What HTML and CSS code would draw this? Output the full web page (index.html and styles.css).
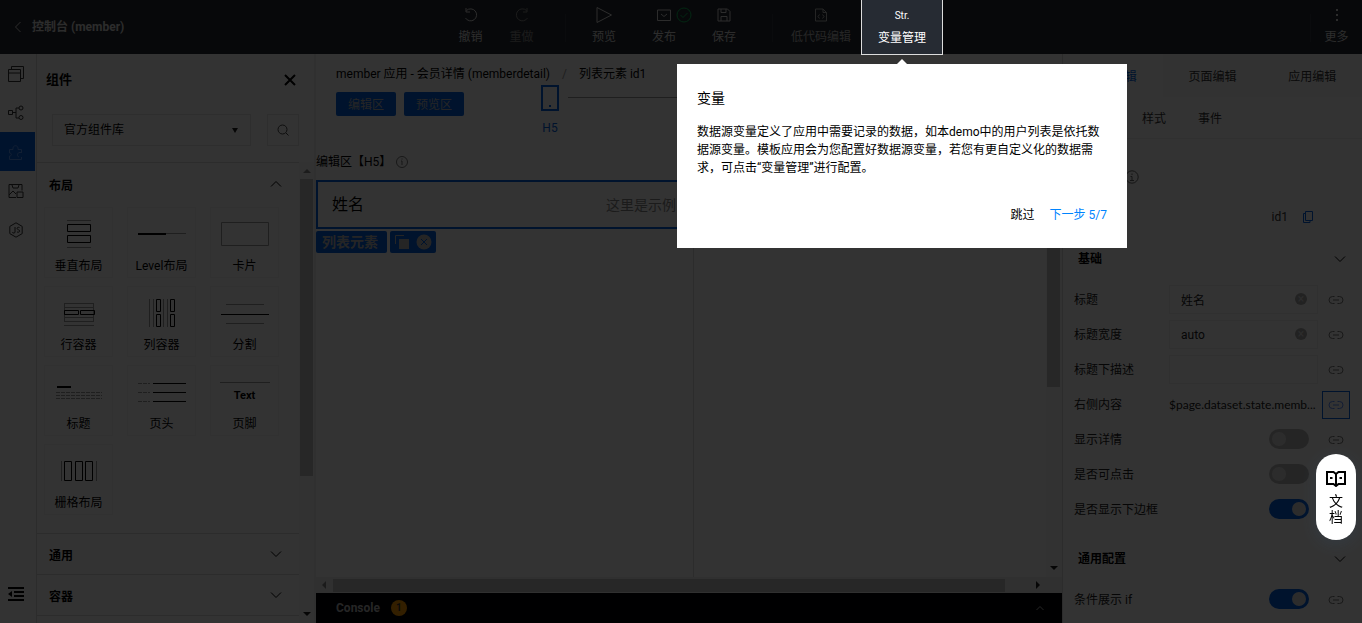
FILE: index.html
```html
<!DOCTYPE html>
<html lang="zh-CN">
<head>
<meta charset="utf-8">
<title>控制台 (member)</title>
<link rel="stylesheet" href="styles.css">
</head>
<body>
<header class="topbar">
  <a class="back" href="#"><svg width="8" height="12" viewBox="0 0 8 12"><path d="M6.500 1L1.500 6l5 5"/></svg><span>控制台 (member)</span></a>
  <nav class="tools">
    <button class="tool"><span class="tool-icon"><svg width="16" height="16" viewBox="0 0 16 16"><path d="M3.500 3.500a6 6 0 1 1-1 7.500M3 1v4h4"/></svg></span>撤销</button>
    <button class="tool faded"><span class="tool-icon"><svg width="16" height="16" viewBox="0 0 16 16"><path d="M12.500 3.500a6 6 0 1 0 1 7.500M13 1v4H9"/></svg></span>重做</button>
    <i class="divider"></i>
    <button class="tool wide"><span class="tool-icon"><svg width="18" height="18" viewBox="0 0 18 18"><path d="M2 1.500v15L16.500 9z"/></svg></span>预览</button>
    <button class="tool wide"><span class="tool-icon"><svg width="16" height="16" viewBox="0 0 16 16"><path d="M1.500 3h13v10.500h-13zM5 7l3 2.500L11 7"/></svg><svg class="ok" width="16" height="16" viewBox="0 0 16 16"><circle cx="8" cy="8" r="7"/><path d="M4.500 8l2.500 2.500 4.500-4.500"/></svg></span>发布</button>
    <button class="tool wide"><span class="tool-icon"><svg width="16" height="16" viewBox="0 0 16 16"><path d="M2 2h9.500L14 4.500V14H2zM5 2v3.500h5V2M5 14V9.500h6V14"/></svg></span>保存</button>
    <i class="divider"></i>
    <button class="tool code"><span class="tool-icon"><svg width="16" height="16" viewBox="0 0 16 16"><path d="M2.500 2H10l3.500 3.500V14h-11zM10 2v3.500h3.500M6.500 7.500l-1.500 2 1.500 2M9.500 7.500l1.500 2-1.500 2"/></svg></span>低代码编辑</button>
    <div class="spotlight">
      <button class="tool vars"><span class="tool-icon">Str.</span>变量管理</button>
      <section class="guide">
        <h2>变量</h2>
        <p>数据源变量定义了应用中需要记录的数据，如本demo中的用户列表是依托数据源变量。模板应用会为您配置好数据源变量，若您有更自定义化的数据需求，可点击“变量管理”进行配置。</p>
        <div class="guide-actions"><button>跳过</button><button class="next">下一步 5/7</button></div>
      </section>
    </div>
  </nav>
  <i class="divider last"></i>
  <button class="tool more"><span class="tool-icon"><svg width="4" height="16" viewBox="0 0 4 16"><path class="solid" d="M1 2h2v2H1zM1 7h2v2H1zM1 12h2v2H1z"/></svg></span>更多</button>
</header>

<div class="workspace">
  <nav class="rail">
    <button aria-label="页面"><svg width="16" height="16" viewBox="0 0 16 16"><path d="M.5 3.500h12v12H.5zM.5 7h12M3.500 3V.5h12v12H13"/></svg></button>
    <button aria-label="大纲"><svg width="16" height="16" viewBox="0 0 16 16"><path d="M.5 5.500h4v4h-4zM4.500 7.500H8M11 3H8v10h3"/><circle cx="13" cy="3" r="2"/><circle cx="13" cy="12.500" r="2"/></svg></button>
    <button class="current" aria-label="组件"><svg width="16" height="16" viewBox="0 0 16 16"><path d="M1.500 5.500h3.500c-1-5 6-5 5 0h3.500V8M1.500 5.500V9c2.500 0 2.500 3 0 3v3.500h12V13M11 8.500c-2 1-2 4 0 4.500M11 8.500h3"/></svg></button>
    <button aria-label="素材"><svg width="16" height="16" viewBox="0 0 16 16"><path d="M8 14.500H1V1.500h13v6M1 12l4-4 3 3M4 2l1 3h5l1-3M9 9h6v5.500H9z"/></svg></button>
    <button aria-label="代码"><svg width="16" height="16" viewBox="0 0 16 16"><path d="M8 .8l6.200 3.600v7.200L8 15.200l-6.200-3.600V4.400zM7 5v5c0 1.500-2.500 1.500-2.500 0M11.500 5.500c-3-1-3 2-1 2.300 2 .4 1.500 3.200-1.500 2.200"/></svg></button>
    <button class="fold" aria-label="收起"><svg width="18" height="16" viewBox="0 0 18 16"><path class="heavy" d="M1 2h16M7 6h10M7 10h10M1 14h16"/><path class="solid" d="M1 8l4-3v6z"/></svg></button>
  </nav>

  <aside class="library">
    <div class="library-head"><h1>组件</h1><button aria-label="关闭"><svg width="12" height="12" viewBox="0 0 12 12"><path class="heavy" d="M1 1l10 10M11 1L1 11"/></svg></button></div>
    <div class="filter">
      <div class="picker"><select aria-label="组件库"><option>官方组件库</option></select><i class="arrow down"></i></div>
      <button aria-label="搜索"><svg width="12" height="12" viewBox="0 0 12 12"><circle cx="5.500" cy="5.500" r="4.500"/><path d="M9 9l2.500 2.500"/></svg></button>
    </div>
    <div class="library-body">
      <div class="groups">
        <section class="group open">
          <button class="group-head">布局<svg width="12" height="8" viewBox="0 0 12 8"><path d="M1 6.500l5-5 5 5"/></svg></button>
          <div class="tiles">
            <button class="tile"><svg width="50" height="34" viewBox="0 0 50 34"><path class="thin" d="M13 3.500h24M13 30.500h24"/><path d="M13.500 7.500h23v7h-23zM13.500 18.500h23v7h-23z"/></svg>垂直布局</button>
            <button class="tile"><svg width="50" height="34" viewBox="0 0 50 34"><path class="heavy" d="M1 17h28"/><path class="thin" d="M29 16.500h20"/></svg>Level布局</button>
            <button class="tile"><svg width="50" height="34" viewBox="0 0 50 34"><path class="thin" d="M1.500 5.500h47v23h-47z"/></svg>卡片</button>
            <button class="tile"><svg width="50" height="34" viewBox="0 0 50 34"><path class="thin" d="M10 7.500h30M10 11.500h30M10 21.500h30M10 25.500h30M10 29.500h30M10.500 7v19M39.500 7v19"/><path d="M10.500 14.500h14v4h-14zM26.500 14.500h14v4h-14z"/></svg>行容器</button>
            <button class="tile"><svg width="50" height="34" viewBox="0 0 50 34"><path class="thin" d="M12.500 3v28M16.500 3v28M26.500 3v28M30.500 3v28"/><path d="M19.500 3.500h4v12h-4zM19.500 18.500h4v12h-4zM33.500 3.500h4v12h-4zM33.500 18.500h4v12h-4z"/></svg>列容器</button>
            <button class="tile"><svg width="50" height="34" viewBox="0 0 50 34"><path class="thin" d="M6 8.500h38M6 27.500h38"/><path d="M1 18.500h48"/></svg>分割</button>
            <button class="tile"><svg width="50" height="34" viewBox="0 0 50 34"><path class="heavy" d="M3 12h14"/><path class="thin" stroke-dasharray="4 1" d="M2 17.500h46M2 20.500h46M2 23.500h46"/></svg>标题</button>
            <button class="tile"><svg width="50" height="34" viewBox="0 0 50 34"><path class="thin" stroke-dasharray="4 1" d="M1 8.500h12M1 17.500h12M1 26.500h12"/><path d="M16 8.500h33M16 17.500h33M16 26.500h33"/></svg>页头</button>
            <button class="tile"><span class="footer-art">Text</span>页脚</button>
            <button class="tile"><svg width="50" height="34" viewBox="0 0 50 34"><path class="thin" d="M7.500 7v20M42.500 7v20"/><path d="M10.500 7.500h7v19h-7zM21.500 7.500h7v19h-7zM31.500 7.500h7v19h-7z"/></svg>栅格布局</button>
          </div>
        </section>
        <section class="group"><button class="group-head">通用<svg width="12" height="8" viewBox="0 0 12 8"><path d="M1 1.500l5 5 5-5"/></svg></button></section>
        <section class="group"><button class="group-head">容器<svg width="12" height="8" viewBox="0 0 12 8"><path d="M1 1.500l5 5 5-5"/></svg></button></section>
        <div class="group"></div>
      </div>
      <div class="vbar"><i class="arrow up pale"></i><i class="thumb"></i><i class="arrow down"></i></div>
    </div>
  </aside>

  <main class="stage">
    <div class="stage-top">
      <div class="crumbs"><span>member 应用 - 会员详情 (memberdetail)</span><span class="slash">/</span><span>列表元素 id1</span></div>
      <div class="modes">
        <button class="primary">编辑区</button><button class="primary">预览区</button>
        <div class="device"><svg width="18" height="26" viewBox="0 0 18 26"><path class="heavy" d="M1 1h16v24H1z"/><path class="solid" d="M8 20h2v2H8z"/></svg><span>H5</span></div>
        <i class="track"></i>
      </div>
    </div>
    <div class="stage-view">
      <div class="viewport">
        <div class="caption">编辑区【H5】<svg width="12" height="12" viewBox="0 0 12 12"><circle cx="6" cy="6" r="5.500"/><path d="M5 5h1v4M6 2.500v1"/></svg></div>
        <div class="phone">
          <div class="cell"><span>姓名</span><span class="sample">这里是示例</span></div>
          <div class="tags"><span class="tag">列表元素</span><span class="tag ops"><button aria-label="复制"><svg width="16" height="16" viewBox="0 0 16 16"><path d="M1.500 10V1.500H10"/><path class="solid" d="M5 5h10v10H5z"/></svg></button><button aria-label="删除"><svg width="16" height="16" viewBox="0 0 16 16"><circle class="solid" cx="8" cy="8" r="7.500"/><path class="cross" d="M5 5l6 6M11 5l-6 6"/></svg></button></span></div>
        </div>
      </div>
      <div class="vbar"><i class="thumb"></i><i class="arrow down"></i></div>
    </div>
    <div class="hbar"><i class="arrow left pale"></i><i class="thumb"></i><i class="arrow right"></i></div>
    <div class="console">Console<span class="count">1</span><svg width="10" height="8" viewBox="0 0 10 8"><path d="M1.500 6L5 2.500 8.500 6"/></svg></div>
  </main>

  <aside class="props">
    <nav class="tabs"><button class="active">组件编辑</button><button>页面编辑</button><button>应用编辑</button></nav>
    <nav class="subtabs"><button>样式</button><button>事件</button></nav>
    <div class="meta hint"><svg width="14" height="14" viewBox="0 0 14 14"><circle cx="7" cy="7" r="6.200"/><path d="M5.500 6.500H7V10M5 10.500h4M7 3.500v1.500"/></svg></div>
    <div class="meta ident"><span>id1</span><button aria-label="复制 id"><svg width="12" height="14" viewBox="0 0 12 14"><path d="M3.500 1.500h7v9h-7zM3 3.500H1.500v9H8V11"/></svg></button></div>
    <section class="block">
      <button class="block-head">基础<svg width="12" height="8" viewBox="0 0 12 8"><path d="M1 1.500l5 5 5-5"/></svg></button>
      <div class="row"><label for="f1">标题</label><div class="field"><input id="f1" value="姓名"><i class="clear">×</i></div><button class="link" aria-label="绑定"><svg width="16" height="10" viewBox="0 0 16 10"><path d="M6.500 1.500h-2a3.500 3.500 0 0 0 0 7h2M9.500 1.500h2a3.500 3.500 0 0 1 0 7h-2M5 5h6"/></svg></button></div>
      <div class="row"><label for="f2">标题宽度</label><div class="field"><input id="f2" value="auto"><i class="clear">×</i></div><button class="link" aria-label="绑定"><svg width="16" height="10" viewBox="0 0 16 10"><path d="M6.500 1.500h-2a3.500 3.500 0 0 0 0 7h2M9.500 1.500h2a3.500 3.500 0 0 1 0 7h-2M5 5h6"/></svg></button></div>
      <div class="row"><label for="f3">标题下描述</label><div class="field"><input id="f3"></div><button class="link" aria-label="绑定"><svg width="16" height="10" viewBox="0 0 16 10"><path d="M6.500 1.500h-2a3.500 3.500 0 0 0 0 7h2M9.500 1.500h2a3.500 3.500 0 0 1 0 7h-2M5 5h6"/></svg></button></div>
      <div class="row"><span class="label">右侧内容</span><span class="expr">$page.dataset.state.memb...</span><button class="link bound" aria-label="绑定"><svg width="16" height="10" viewBox="0 0 16 10"><path d="M6.500 1.500h-2a3.500 3.500 0 0 0 0 7h2M9.500 1.500h2a3.500 3.500 0 0 1 0 7h-2M5 5h6"/></svg></button></div>
      <div class="row"><label for="s1">显示详情</label><input class="switch" id="s1" type="checkbox"><button class="link" aria-label="绑定"><svg width="16" height="10" viewBox="0 0 16 10"><path d="M6.500 1.500h-2a3.500 3.500 0 0 0 0 7h2M9.500 1.500h2a3.500 3.500 0 0 1 0 7h-2M5 5h6"/></svg></button></div>
      <div class="row"><label for="s2">是否可点击</label><input class="switch" id="s2" type="checkbox"><span class="link"></span></div>
      <div class="row"><label for="s3">是否显示下边框</label><input class="switch" id="s3" type="checkbox" checked><span class="link"></span></div>
    </section>
    <section class="block">
      <button class="block-head">通用配置<svg width="12" height="8" viewBox="0 0 12 8"><path d="M1 1.500l5 5 5-5"/></svg></button>
      <div class="row"><label for="s4">条件展示 if</label><input class="switch" id="s4" type="checkbox" checked><button class="link" aria-label="绑定"><svg width="16" height="10" viewBox="0 0 16 10"><path d="M6.500 1.500h-2a3.500 3.500 0 0 0 0 7h2M9.500 1.500h2a3.500 3.500 0 0 1 0 7h-2M5 5h6"/></svg></button></div>
    </section>
  </aside>
</div>

<div class="mask"></div>
<a class="docs" href="#"><svg width="20" height="16" viewBox="0 0 20 16"><path d="M1 1h6.500L10 3l2.500-2H19v12h-6.500L10 15l-2.500-2H1zM10 3v12M4 7h2.500M13.500 7H16"/></svg><span>文</span><span>档</span></a>
</body>
</html>
```

FILE: styles.css
```css
* { box-sizing: border-box; }
body {
  margin: 0;
  height: 100vh;
  display: flex;
  flex-direction: column;
  overflow: hidden;
  background: #fff;
  color: #000;
  font: 12px/18px Roboto, "Noto Sans CJK SC", sans-serif;
}
button, input, select { font: inherit; color: inherit; background: none; border: 0; padding: 0; margin: 0; }
h1, h2, p { margin: 0; }
a { color: inherit; text-decoration: none; }
i { font-style: normal; }
svg { fill: none; stroke: currentColor; flex: none; display: block; }
.thin { stroke: #999; }
.heavy { stroke-width: 2; }
.solid { fill: currentColor; stroke: none; }

.topbar { display: flex; height: 54px; flex: none; background: #262b33; color: #ddd; }
.back { display: flex; align-items: center; gap: 10px; width: 445px; padding-left: 14px; font-weight: bold; }
.tools { display: flex; }
.tool { display: flex; flex-direction: column; align-items: center; gap: 4px; width: 51px; padding-top: 6px; white-space: nowrap; }
.tool-icon { display: flex; align-items: center; justify-content: center; gap: 4px; height: 18px; font-size: 10px; }
.faded { color: #888; }
.wide { width: 60px; }
.code { width: 80px; color: #bbb; }
.ok { color: #0abf5b; margin-right: -20px; }
.divider { width: 1px; height: 28px; margin: 14px 8px 0 18px; background: #333a44; }
.last { margin: 14px 0 0 auto; }
.more { width: 51px; }
.spotlight { position: relative; z-index: 20; }
.vars { width: 82px; height: 55px; padding-top: 7px; background: #262b33; border: 1px solid #ddd; border-top: 0; color: #fff; }
.guide {
  position: absolute; top: 64px; left: 50%; margin-left: -225px; width: 450px;
  padding: 24px 20px; background: #fff; color: #000;
}
.guide::before {
  content: ""; position: absolute; top: -5px; left: 220px;
  border: 5px solid transparent; border-top: 0; border-bottom-color: #fff;
}
.guide h2 { font-size: 14px; line-height: 20px; font-weight: normal; margin-bottom: 15px; }
.guide-actions { display: flex; justify-content: flex-end; gap: 15px; margin-top: 29px; }
.next { color: #0084ff; }

.workspace { display: flex; flex: 1; min-height: 0; }
.rail { display: flex; flex-direction: column; width: 37px; border-right: 1px solid #ddd; padding: 0 1px 10px 0; color: #333; }
.rail button { display: flex; align-items: center; justify-content: center; height: 39px; padding-right: 4px; }
.rail .current { background: #005fe0; color: #5b9bff; }
.rail .fold { margin-top: auto; color: #000; }

.library { display: flex; flex-direction: column; width: 279px; border-right: 2px solid #eee; }
.library-head { display: flex; align-items: center; justify-content: space-between; padding: 16px 18px 14px 9px; }
.library-head h1 { font-size: 13px; line-height: 20px; }
.filter { display: flex; gap: 16px; padding: 10px 15px 16px; }
.picker { position: relative; flex: 1; }
.picker select { width: 100%; height: 32px; padding: 0 11px; border: 1px solid #e5e5e5; appearance: none; }
.picker .arrow { position: absolute; right: 13px; top: 14px; }
.filter button { display: flex; align-items: center; justify-content: center; width: 32px; height: 32px; border: 1px solid #e5e5e5; color: #444; }
.library-body { display: flex; flex: 1; min-height: 0; }
.groups { flex: 1; overflow: hidden; }
.group { border-top: 1px solid #ddd; }
.group-head { display: flex; align-items: center; justify-content: space-between; width: 100%; height: 40px; padding: 4px 17px 0 12px; font-weight: bold; }
.group-head svg { margin-bottom: 4px; }
.open .group-head { height: 44px; padding-top: 2px; }
.tiles { display: grid; grid-template-columns: repeat(3, 69px); gap: 8px 14px; padding: 0 7px 18px; }
.tile { display: flex; flex-direction: column; align-items: center; gap: 6px; height: 71px; padding-top: 9px; border: 1px solid #f2f2f2; white-space: nowrap; }
.footer-art { width: 50px; height: 34px; padding-top: 12px; background: linear-gradient(#999, #999) 0 7px / 50px 1px no-repeat; font-weight: bold; font-size: 11px; }

.arrow { width: 0; height: 0; border: 4px solid transparent; flex: none; }
.arrow.down { border-top-color: #222; border-bottom: 0; }
.arrow.up { border-bottom-color: #222; border-top: 0; }
.arrow.left { border-right-color: #222; border-left: 0; }
.arrow.right { border-left-color: #222; border-right: 0; }
.arrow.pale { opacity: .5; }
.picker .arrow { border-width: 3px; border-top-width: 5px; }
.vbar { display: flex; flex-direction: column; align-items: center; width: 15px; padding: 7px 0; background: #f8f8f8; }
.vbar .thumb { width: 13px; height: 297px; margin: 6px 0 auto; background: #c4c4c4; }

.stage { display: flex; flex-direction: column; flex: 1; min-width: 0; }
.stage-top { padding: 11px 20px 0; }
.crumbs { display: flex; gap: 12px; white-space: nowrap; }
.slash { color: #999; }
.modes { display: flex; align-items: flex-start; gap: 8px; }
.primary { width: 60px; height: 24px; margin-top: 9px; padding-top: 2px; background: #005fe0; color: #bbb; border-radius: 2px; }
.device { display: flex; flex-direction: column; align-items: center; gap: 8px; width: 20px; margin: 2px 0 0 68px; color: #005fe0; }
.track { flex: 1; height: 1px; margin-top: 14px; background: #999; }
.stage-view { display: flex; flex: 1; min-height: 0; margin-top: 12px; }
.viewport { display: flex; flex-direction: column; flex: 1; }
.caption { display: flex; align-items: center; gap: 5px; height: 31px; padding-bottom: 5px; }
.caption svg { color: #777; }
.phone { flex: 1; width: 378px; border-right: 1px solid #ddd; }
.cell { display: flex; align-items: center; justify-content: space-between; height: 49px; padding: 0 12px 0 14px; border: 2px solid #005fe0; font-size: 16px; }
.sample { font-size: 14px; color: #888; width: 73px; white-space: nowrap; }
.tags { display: flex; gap: 3px; padding-top: 2px; }
.tag { display: flex; align-items: center; gap: 6px; height: 22px; padding: 0 9px 0 6px; background: #005fe0; color: #bbb; border-radius: 2px; font-size: 14px; font-weight: bold; }
.ops { padding: 0 4px; }
.cross { stroke: #005fe0; }
.stage-view .vbar { width: 16px; padding: 7px 1px 7px 0; }
.stage-view .vbar .thumb { height: 231px; margin-top: 0; }
.hbar { display: flex; align-items: center; height: 16px; padding: 0 22px 0 6px; background: #f0f0f0; }
.hbar .thumb { flex: 1; height: 13px; margin: 0 31px 0 7px; background: #c4c4c4; }
.console { display: flex; align-items: center; height: 30px; padding: 0 17px 0 20px; background: #000008; color: #bbb; font-weight: bold; font-size: 12px; }
.console svg { margin-left: auto; }
.count { width: 16px; height: 16px; margin-left: 11px; border-radius: 8px; background: #ff9d00; color: #333; font-size: 10px; line-height: 16px; text-align: center; }

.props { width: 300px; border-left: 1px solid #ddd; overflow: hidden; }
.tabs { display: flex; }
.tabs button { flex: 1; height: 43px; padding-top: 2px; background: #f8f8f8; color: #333; }
.tabs .active { background: #fff; color: #005fe0; }
.subtabs { display: flex; gap: 32px; height: 42px; padding: 2px 0 0 79px; border-bottom: 1px solid #eee; color: #333; margin-bottom: 18px; }
.meta { display: flex; align-items: center; height: 40px; color: #333; }
.hint { padding-left: 62px; color: #666; }
.ident { justify-content: flex-end; gap: 14px; height: 39px; padding-right: 48px; }
.ident button { color: #005fe0; }
.block { padding-bottom: 9px; }
.block-head { display: flex; align-items: center; justify-content: space-between; width: 100%; height: 46px; padding: 0 16px 1px 15px; font-weight: bold; }
.row { display: flex; align-items: center; height: 35px; padding: 0 12px 0 11px; color: #222; }
.row label, .label { flex: none; width: 95px; white-space: nowrap; }
.field { position: relative; flex: 1; min-width: 0; }
.field input { width: 100%; height: 29px; padding: 0 32px 0 11px; border: 1px solid #eee; display: block; }
.clear { position: absolute; right: 11px; top: 8px; width: 12px; height: 12px; border-radius: 6px; background: #aaa; color: #ddd; line-height: 12px; text-align: center; }
.expr { flex: 1; min-width: 0; overflow: hidden; white-space: nowrap; font-family: Lato, "Noto Sans CJK SC", sans-serif; }
.link { display: flex; flex: none; align-items: center; justify-content: center; width: 28px; height: 28px; margin-left: 4px; color: #777; }
.bound { border: 1px solid #005fe0; color: #5b8cff; }
.switch { appearance: none; flex: none; width: 40px; height: 20px; margin: 0 9px 2px auto; border-radius: 10px; background: #bbb; }
.switch::before { content: ""; display: block; width: 14px; height: 14px; margin: 3px; border-radius: 7px; background: #ddd; }
.switch:checked { background: #005fe0; }
.switch:checked::before { margin-left: 23px; }

.mask { position: fixed; inset: 0; z-index: 10; background: rgba(0, 0, 0, .8); }
.docs {
  position: fixed; z-index: 30; right: 6px; top: 454px; width: 40px; height: 86px;
  display: flex; flex-direction: column; align-items: center; padding-top: 17px;
  background: #fff; border-radius: 20px; box-shadow: 0 4px 16px rgba(54, 88, 125, .2); font-size: 14px; line-height: 16px;
}
.docs svg { stroke-width: 2; margin-bottom: 6px; }
```
